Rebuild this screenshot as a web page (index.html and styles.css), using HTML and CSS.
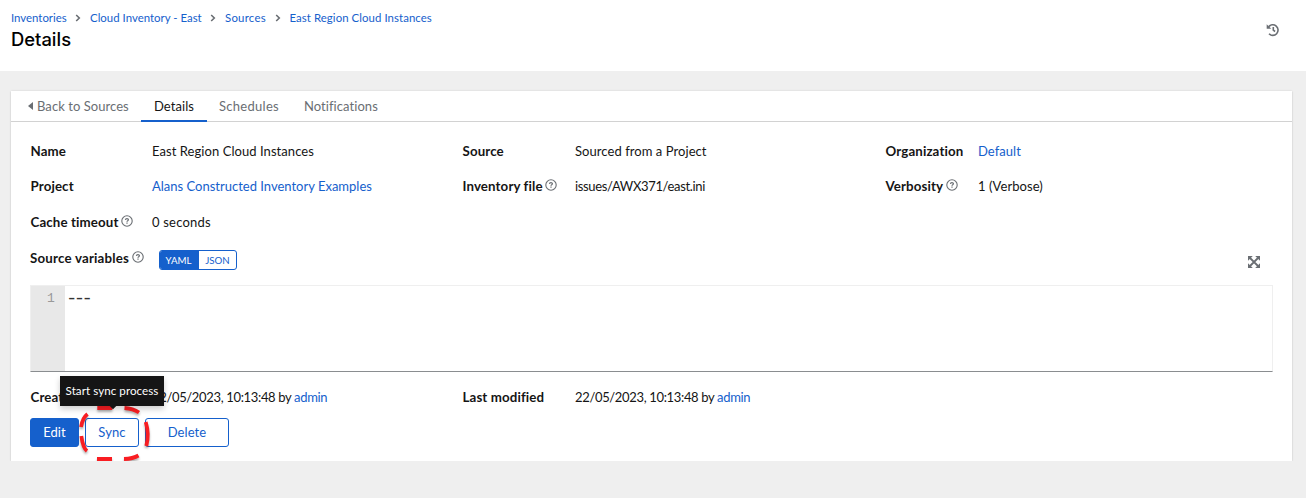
FILE: index.html
```html
<!DOCTYPE html>
<html lang="en">
<head>
<meta charset="utf-8">
<title>Details</title>
<link rel="stylesheet" href="styles.css">
</head>
<body>
<svg class="sprite" width="0" height="0">
  <symbol id="help" viewBox="0 0 12 12"><circle cx="6" cy="6" r="5.2" fill="none" stroke="currentColor" stroke-width="1.1"/><path d="M4.4 4.9C4.5 3.2 7.5 3.2 7.4 4.8 7.4 5.7 6 5.7 6 6.8" fill="none" stroke="currentColor" stroke-width="1.2"/><path d="M5.4 7.6h1.2v1.2H5.4z" fill="currentColor"/></symbol>
  <symbol id="chev" viewBox="0 0 6 8"><path d="M1.2 1 4.3 4 1.2 7" fill="none" stroke="currentColor" stroke-width="1.6"/></symbol>
</svg>
<header class="header">
  <div>
    <nav class="crumbs">
      <a class="crumb-inventories">Inventories</a><svg class="chev"><use href="#chev"/></svg>
      <a class="crumb-inventory">Cloud Inventory - East</a><svg class="chev"><use href="#chev"/></svg>
      <a class="crumb-sources">Sources</a><svg class="chev"><use href="#chev"/></svg>
      <a class="crumb-source">East Region Cloud Instances</a>
    </nav>
    <h1 class="title">Details</h1>
  </div>
  <svg class="history" viewBox="0 0 14 14"><path d="M2.6 3.8A5.3 5.3 0 1 1 3 10.8M7.3 4v3.2l1.8 1.3" fill="none" stroke="currentColor" stroke-width="1.6"/><path d="M.7 1.2v4.6h4.6z" fill="currentColor"/></svg>
</header>
<main class="card">
  <nav class="tabs">
    <a class="tab back"><svg class="caret" viewBox="0 0 5 8"><path d="M5 0v8L0 4z" fill="currentColor"/></svg>Back to Sources</a>
    <a class="tab current">Details</a>
    <a class="tab schedules">Schedules</a>
    <a class="tab">Notifications</a>
  </nav>
  <section class="body">
    <dl class="grid">
      <dt>Name</dt><dd>East Region Cloud Instances</dd>
      <dt>Source</dt><dd>Sourced from a Project</dd>
      <dt>Organization</dt><dd><a>Default</a></dd>
      <dt>Project</dt><dd><a class="snug">Alans Constructed Inventory Examples</a></dd>
      <dt>Inventory file<svg class="help"><use href="#help"/></svg></dt><dd class="numeric">issues/AWX371/east.ini</dd>
      <dt>Verbosity<svg class="help"><use href="#help"/></svg></dt><dd>1 (Verbose)</dd>
      <dt>Cache timeout<svg class="help"><use href="#help"/></svg></dt><dd class="seconds">0 seconds</dd>
    </dl>
    <div class="vars">
      <div class="label vars-label">Source variables<svg class="help"><use href="#help"/></svg></div>
      <div class="toggle"><span class="on">YAML</span><span class="off">JSON</span></div>
      <svg class="expand" viewBox="0 0 12 12"><path d="M2 2l8 8M10 2l-8 8" stroke="currentColor" stroke-width="1.8"/><path d="M0 0h4.8L0 4.8zM12 0v4.8L7.2 0zM0 12V7.2L4.800 12zM12 12H7.200L12 7.200z" fill="currentColor"/></svg>
    </div>
    <div class="editor"><div class="gutter">1</div><div class="code">---</div></div>
    <dl class="grid dates">
      <dt>Created</dt><dd class="numeric">22/05/2023, 10:13:48 by <a>admin</a></dd>
      <dt>Last modified</dt><dd class="numeric">22/05/2023, 10:13:48 by <a>admin</a></dd>
    </dl>
    <div class="actions">
      <button class="btn primary">Edit</button>
      <div class="sync">
        <button class="btn sync-btn">Sync</button>
        <svg class="ring" viewBox="0 0 80 68"><path d="M22.300 8H37.300M49.500 8Q58 8.500 64 12.500M70.700 22Q74.500 34 71.300 46M63.500 55.500Q58 58.700 49 59M37 59H22M12 51Q8 48 6.300 36M6 27Q7.500 18 12.500 14" fill="none" stroke="#f91d22" stroke-width="3.800"/></svg>
        <div class="tooltip">Start sync process</div>
      </div>
      <button class="btn delete">Delete</button>
    </div>
  </section>
</main>
</body>
</html>
```
FILE: styles.css
```css
* { box-sizing: border-box; }
body { margin: 0; background: #efefef; font: 13px/18px Lato, sans-serif; letter-spacing: .06px; color: #151515; }
.sprite { position: absolute; }
a { color: #1560cc; }

.header { height: 71px; background: #fff; padding: 9px 26.500px 0 11px; display: flex; justify-content: space-between; }
.crumbs { display: flex; align-items: center; height: 18px; font-size: 11.400px; white-space: nowrap; }
.crumb-inventories { width: 56px; letter-spacing: 0; }
.crumb-inventory { width: 112px; letter-spacing: .02px; }
.crumb-sources { width: 41.500px; letter-spacing: .25px; }
.crumb-source { letter-spacing: .07px; }
.chev { width: 6px; height: 8px; margin: 0 9px 0 8px; color: #6a6e73; }
.title { margin: 0; font: 500 18.400px/25px Inter, sans-serif; letter-spacing: 0; color: #000; }
.history { width: 14px; height: 14px; margin-top: 13.500px; color: #6a6e73; }

.card { margin: 20px 14px 0 11px; height: 370px; background: #fff; box-shadow: 0 1px 1px rgba(3, 3, 3, .14), 0 0 2px rgba(3, 3, 3, .12); }
.tabs { display: flex; height: 31px; padding-left: 5px; border-bottom: 1px solid #d2d2d2; }
.tab { display: flex; align-items: center; height: 31px; padding: 0 12px 1px; color: #6a6e73; }
.back { width: 125px; gap: 4px; }
.current { width: 66px; padding: 1px 0 0 13px; color: #151515; border-bottom: 2px solid #1560cc; }
.schedules { width: 85px; letter-spacing: .28px; }
.caret { width: 5px; height: 8px; }

.body { padding: 11px 19px 0; }
.grid { display: grid; grid-template-columns: 122px 310px 113px 310px 93px 1fr; grid-auto-rows: 35.500px; align-items: center; margin: 0; }
dt, .label { display: flex; align-items: center; font-size: 13.300px; font-weight: 700; letter-spacing: .12px; }
dt { padding-left: .5px; }
dd { margin: 0; }
.snug { letter-spacing: 0; }
.seconds { letter-spacing: .2px; }
.numeric { letter-spacing: -.34px; }
.help { width: 12px; height: 12px; margin: -2px 0 0 2.500px; color: #6a6e73; flex: none; }

.vars { display: flex; align-items: flex-start; padding-top: 9px; height: 45px; }
.vars-label { width: 129px; height: 18px; letter-spacing: .2px; }
.toggle { display: flex; width: 78px; height: 20px; margin-top: 1px; border: 1px solid #1560cc; border-radius: 3px; font-size: 9.700px; line-height: 18px; text-align: center; overflow: hidden; letter-spacing: 0; }
.on { width: 39px; padding-right: 2px; background: #1560cc; color: #fff; }
.off { flex: 1; color: #1560cc; }
.expand { width: 12px; height: 12px; margin: 7.500px 13.500px 0 auto; color: #6a6e73; }

.editor { display: flex; width: 1243px; height: 87px; border: 1px solid #efefef; border-bottom-color: #8a8d90; font: 13px/26px "Liberation Mono", monospace; letter-spacing: 0; }
.gutter { width: 34px; padding-left: 16px; height: 85px; background: #e8e8e8; color: #999; }
.code { padding-left: 1px; color: #333; font-size: 19px; line-height: 27px; letter-spacing: -3.600px; }

.dates { padding-top: 8px; height: 46px; }
.actions { display: flex; }
.btn { display: block; height: 29px; padding: 0; border: 1px solid #1560cc; border-radius: 3px; background: #fff; color: #1560cc; font: 13px Lato, sans-serif; letter-spacing: .1px; }
.primary { width: 49px; background: #1560cc; color: #fff; }
.sync { position: relative; margin: 0 6px; }
.sync-btn { width: 54px; }
.delete { width: 84px; }
.ring { position: absolute; left: -10px; top: -18px; width: 80px; height: 68px; filter: drop-shadow(0 2px 1px rgba(0, 0, 0, .3)); }
.tooltip { position: absolute; left: -25px; top: -42px; width: 104px; height: 30px; background: #151515; color: #fff; font-size: 11.600px; line-height: 30px; text-align: center; white-space: nowrap; box-shadow: 0 3px 6px rgba(3, 3, 3, .2); }
.tooltip::after { content: ""; position: absolute; left: 50px; bottom: -2px; width: 6px; height: 6px; background: #151515; transform: rotate(45deg); }
```
